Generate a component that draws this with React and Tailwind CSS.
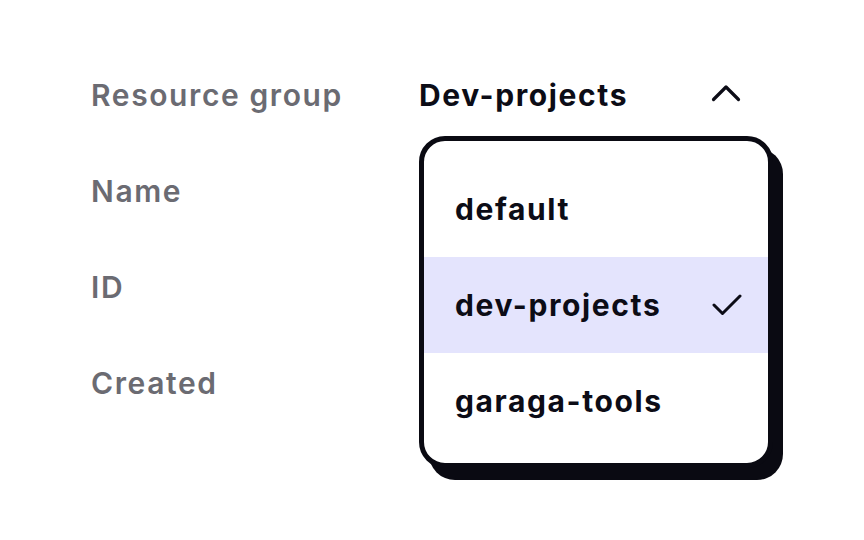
import React from "react";

export default function App() {
  const font = { fontFamily: "Inter, 'Noto Sans', sans-serif" };
  return (
    <div className="w-[864px] h-[540px] bg-white relative" style={font}>
      <div className="flex pt-[72px] pl-[91px]">
        <div className="flex flex-col w-[328px]">
          {["Resource group", "Name", "ID", "Created"].map((t) => (
            <div key={t} className="h-[96px] text-[30px] leading-[46px] font-semibold text-[#6b6b72] tracking-[1.6px]">
              {t}
            </div>
          ))}
        </div>
        <div className="flex flex-col w-[364px]">
          <div className="flex items-start justify-between pr-[42px] h-[64px]">
            <span className="text-[30px] leading-[46px] font-bold text-[#0c0c16] tracking-[1.6px]">Dev-projects</span>
            <svg width="30" height="18" viewBox="0 0 30 18" className="mt-[12px]" fill="none" stroke="#0c0c16" strokeWidth="3.2" strokeLinecap="round" strokeLinejoin="round">
              <path d="M2.5 15.5 L15 3 L27.5 15.5" />
            </svg>
          </div>
          <div className="relative w-[354px] h-[332px]">
            <div className="absolute left-[10px] top-[12px] w-[354px] h-[332px] rounded-[26px] bg-[#0a0a12]" />
            <div className="relative w-[354px] h-[332px] rounded-[26px] border-[5px] border-[#0a0a12] bg-white overflow-hidden pt-[20px]">
              {["default", "dev-projects", "garaga-tools"].map((t) => (
                <div
                  key={t}
                  className={`h-[96px] flex items-center justify-between pl-[31px] pr-[26px] ${t === "dev-projects" ? "bg-[#e4e4fd]" : ""}`}
                >
                  <span className="text-[30px] font-bold text-[#0c0c16] tracking-[1.6px]">{t}</span>
                  {t === "dev-projects" && (
                    <svg width="30" height="24" viewBox="0 0 30 24" fill="none" stroke="#0c0c16" strokeWidth="3" strokeLinecap="round" strokeLinejoin="round">
                      <path d="M2 12 L10.5 20.5 L28 3" />
                    </svg>
                  )}
                </div>
              ))}
            </div>
          </div>
        </div>
      </div>
    </div>
  );
}
